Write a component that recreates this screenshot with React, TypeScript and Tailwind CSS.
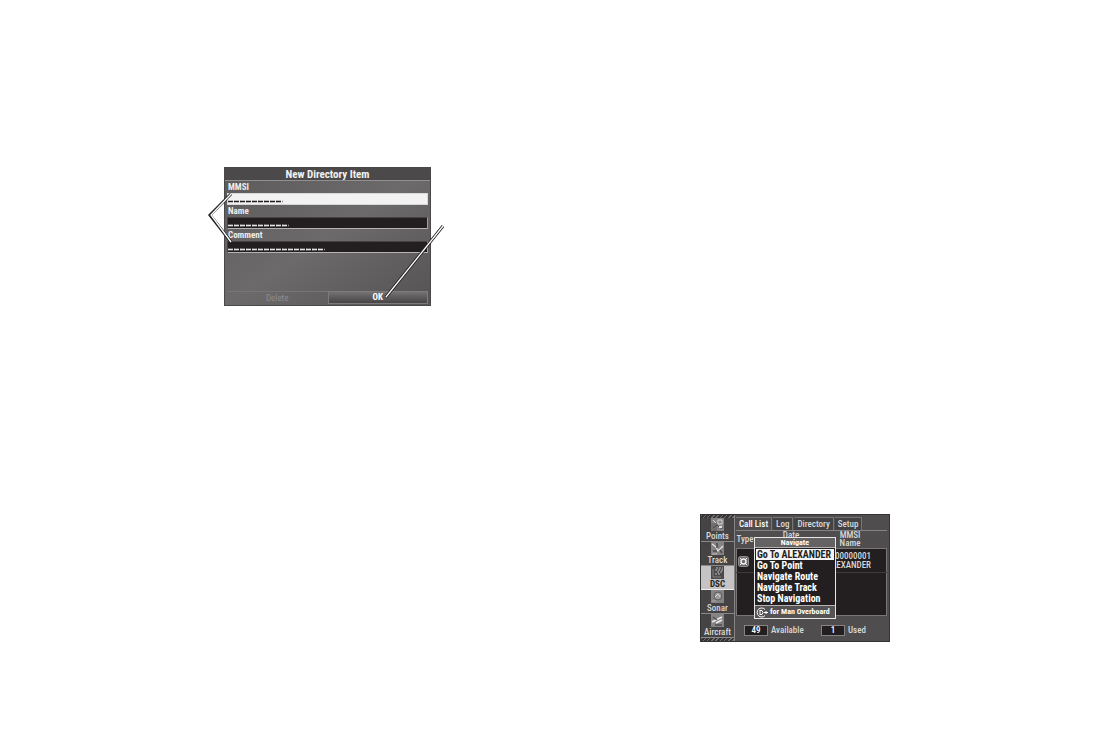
import React from 'react';

interface FieldProps {
  id: string;
  label: string;
  length: number;
  active?: boolean;
}

const Field: React.FC<FieldProps> = ({ id, label, length, active = false }) => (
  <div>
    <label htmlFor={id} className="block h-3 pl-px text-[9px] leading-3 font-bold text-[#ececec]">{label}</label>
    <div className={`border ${active ? 'border-[#d8d8d8] bg-[#f3f2f2]' : 'border-t-[#444243] border-r-[#a09e9e] border-b-[#b5b3b4] border-l-[#444243] bg-[#231f20]'}`}>
      {/* the mask cuts the underscores into one dash per character */}
      <input
        id={id}
        defaultValue={'_'.repeat(length)}
        className={`block h-[10px] w-full bg-transparent pb-px font-['Liberation_Mono',monospace] text-[10px] leading-[8px] font-bold outline-none [-webkit-text-stroke:1px] [mask-image:repeating-linear-gradient(90deg,#000_0_5px,transparent_5px_6px)] ${active ? 'text-[#231f20]' : 'text-[#e4e4e4]'}`}
      />
    </div>
  </div>
);

const DirectoryForm = () => (
  <div className="relative w-[207px]">
    <form className="flex h-[139px] flex-col border border-[#4a4849] bg-linear-to-br from-[#5c5a5b] via-[#6c6a6b] to-[#555354]">
      <h1 className="h-[13px] border-b border-[#918f90] bg-[#4b494a] text-center text-[11px] leading-[13px] font-bold text-[#f2f2f2]">New Directory Item</h1>
      <div className="flex flex-col px-[2px]">
        <Field id="mmsi" label="MMSI" length={9} active />
        <Field id="name" label="Name" length={10} />
        <Field id="comment" label="Comment" length={16} />
      </div>
      <div className="mt-auto grid grid-cols-2 px-[2px] pb-px">
        <button type="button" className="h-[13px] border-t border-[#777576] text-[9px] leading-3 text-[#8e8c8d]">Delete</button>
        <button type="button" className="h-[13px] border border-[#7d7b7c] bg-linear-to-b from-[#747273] to-[#474546] text-[9px] leading-[11px] font-bold text-white">OK</button>
      </div>
    </form>
    <svg className="pointer-events-none absolute top-0 -left-4" width="240" height="140" viewBox="0 0 240 140" fill="none" aria-hidden="true">
      <g stroke="#231f20" strokeWidth="3">
        <path d="M23 27 2 48l21 27" />
        <path d="M235 59 178 130" />
      </g>
      <g stroke="#fff" strokeWidth="1.3">
        <path d="M23 27 3 48l20 27" />
        <path d="M235 59 178 130" />
      </g>
    </svg>
  </div>
);

const pages = ['Points', 'Track', 'DSC', 'Sonar', 'Aircraft'];
const tabs = ['Call List', 'Log', 'Directory', 'Setup'];
const commands = ['Go To ALEXANDER', 'Go To Point', 'Navigate Route', 'Navigate Track', 'Stop Navigation'];

const PageIcon: React.FC<{ name: string }> = ({ name }) => (
  <svg width="13" height="13" viewBox="0 0 13 13" fill="none" aria-hidden="true">
    <rect width="13" height="13" fill={name === 'DSC' ? '#4b494a' : '#858384'} />
    {name === 'Points' && (
      <>
        <path d="M0 5h6v8H0z" fill="#706e6f" />
        <path d="M7 2h4v4H7zM2 2l3 3" stroke="#d6d6d6" />
        <path d="m2 10 4-3 3 3h3" stroke="#4d4b4c" />
        <path d="M8 8h3v2H8z" fill="#e4e4e4" />
      </>
    )}
    {name === 'Track' && (
      <>
        <path d="m1 2 4 3 2 4 5-5" stroke="#e2e2e2" strokeWidth="1.3" />
        <path d="M6 1v5M2 9h4M9 8l2 3" stroke="#4d4b4c" strokeWidth="1.5" />
        <path d="M1 12h5" stroke="#bbb" />
      </>
    )}
    {name === 'DSC' && (
      <>
        <path d="M5 2h7M4 4h8M6 6h6M4 8h6" stroke="#bdbbbc" strokeDasharray="2 1" />
        <path d="M2 3v8h8" stroke="#858384" />
      </>
    )}
    {name === 'Sonar' && (
      <>
        <circle cx="7" cy="6" r="4" fill="#9c9a9b" stroke="#5e5c5d" />
        <path d="m4 7 3-3 2 3" stroke="#d9d9d9" />
        <path d="M1 11h4" stroke="#aaa" />
      </>
    )}
    {name === 'Aircraft' && (
      <>
        <path d="m1 8 10-5M5 9l6-3" stroke="#ececec" strokeWidth="1.6" />
        <path d="m2 3 4 3M4 11h7" stroke="#504e4f" strokeWidth="1.3" />
      </>
    )}
  </svg>
);

const CallList = () => (
  <div className="relative flex h-[128px] w-[190px] border border-[#343233] bg-[#4f4d4e] text-[9px] leading-[10px] font-medium text-[#d8d8d8]">
    <nav className="flex w-[34px] flex-col border-r border-[#858384]">
      <div className="h-[3px] bg-[repeating-linear-gradient(135deg,#6e6c6d_0_1px,#373536_1px_3px)]" />
      {pages.map((page) => (
        <a
          key={page}
          href={`#${page}`}
          className={`flex flex-1 flex-col items-center border-b ${page === 'DSC' ? 'border-[#f2f2f2] bg-[#c5c3c4] font-bold text-[#231f20]' : 'border-[#8a8889] bg-[#454344]'}`}
        >
          <PageIcon name={page} />
          {page}
        </a>
      ))}
      <div className="h-1 bg-[repeating-linear-gradient(135deg,#6e6c6d_0_1px,#373536_1px_3px)]" />
    </nav>

    <div className="flex flex-1 flex-col pr-[2px] pl-px">
      <div role="tablist" className="mt-[2px] flex h-[14px] gap-px border-b border-[#858384]">
        {tabs.map((tab, i) => (
          <button
            key={tab}
            role="tab"
            type="button"
            aria-selected={i === 0}
            className={`border-t border-r border-[#777576] px-[3px] whitespace-nowrap ${i === 0 ? 'text-white' : 'bg-[#444243]'}`}
          >
            {tab}
          </button>
        ))}
      </div>
      <table className="w-full table-fixed border-collapse">
        <colgroup>
          <col className="w-[24px]" />
          <col />
          <col className="w-[73px]" />
        </colgroup>
        <thead className="leading-[8px]">
          <tr className="h-[17px]">
            <th className="p-0 text-left font-medium">Type</th>
            <th className="p-0 pl-2 align-top font-medium">Date</th>
            <th className="p-0 font-medium">MMSI<br />Name</th>
          </tr>
        </thead>
        <tbody className="border border-[#777576] bg-[#231f20]">
          <tr className="h-[24px] border-b border-[#3c3a3b] align-top">
            <td className="p-0 pt-[7px] pl-px">
              <svg width="11" height="11" viewBox="0 0 11 11" fill="none" aria-label="Distress call">
                <rect x="0.5" y="0.5" width="10" height="10" rx="2" fill="#6a6869" stroke="#8f8d8e" />
                <circle cx="5.5" cy="5.5" r="2.5" stroke="#f0f0f0" strokeWidth="1.5" />
                <path d="m2 2 2 2m3 3 2 2m0-7L7 4M4 7 2 9" stroke="#f0f0f0" />
              </svg>
            </td>
            <td />
            <td className="p-0 pt-[3px] pr-[15px] text-right leading-[9px]">00000001<br />ALEXANDER</td>
          </tr>
          <tr className="h-[43px]">
            <td colSpan={3} />
          </tr>
        </tbody>
      </table>
      <div className="flex flex-1 items-center gap-[3px] pt-1 pl-2">
        <output id="available" className="h-[11px] w-6 border border-[#858384] bg-[#231f20] text-center leading-[9px] text-white">49</output>
        <label htmlFor="available" className="w-[47px]">Available</label>
        <output id="used" className="h-[11px] w-6 border border-[#858384] bg-[#231f20] text-center leading-[9px] text-white">1</output>
        <label htmlFor="used">Used</label>
      </div>
    </div>

    <div role="menu" className="absolute top-[22px] left-[53px] flex w-[82px] flex-col border border-[#e6e6e6] bg-[#231f20] font-bold text-white">
      <h2 className="h-[10px] border-b border-[#b5b3b4] bg-[#646263] text-center text-[8px] leading-[9px]">Navigate</h2>
      <div className="flex flex-col p-px">
        {commands.map((command, i) => (
          <button
            key={command}
            role="menuitem"
            type="button"
            className={`h-[11px] pl-px text-left text-[10px] leading-[11px] whitespace-nowrap ${i === 0 ? 'bg-[#f4f4f4] text-[#231f20]' : ''}`}
          >
            {command}
          </button>
        ))}
      </div>
      <p className="flex h-[13px] items-center gap-[2px] border-t border-[#b5b3b4] bg-[#555354] pl-px text-[8px] whitespace-nowrap">
        <svg className="shrink-0" width="12" height="11" viewBox="0 0 12 11" fill="none" stroke="#fff" aria-hidden="true">
          <path d="M9 2.5A4.5 4.5 0 1 0 9 8.5" />
          <path d="M4 3v5M4 3.5h2q2 2 0 4H4M8 5.5h4M10 4v3" />
        </svg>
        for Man Overboard
      </p>
    </div>
  </div>
);

export default function App() {
  return (
    <main className="grid min-h-screen grid-cols-2 bg-white font-['Roboto_Condensed','Lato','Liberation_Sans',sans-serif]">
      <section className="pt-[167px] pl-56">
        <DirectoryForm />
      </section>
      <section className="pt-[514px] pl-[147px]">
        <CallList />
      </section>
    </main>
  );
}
